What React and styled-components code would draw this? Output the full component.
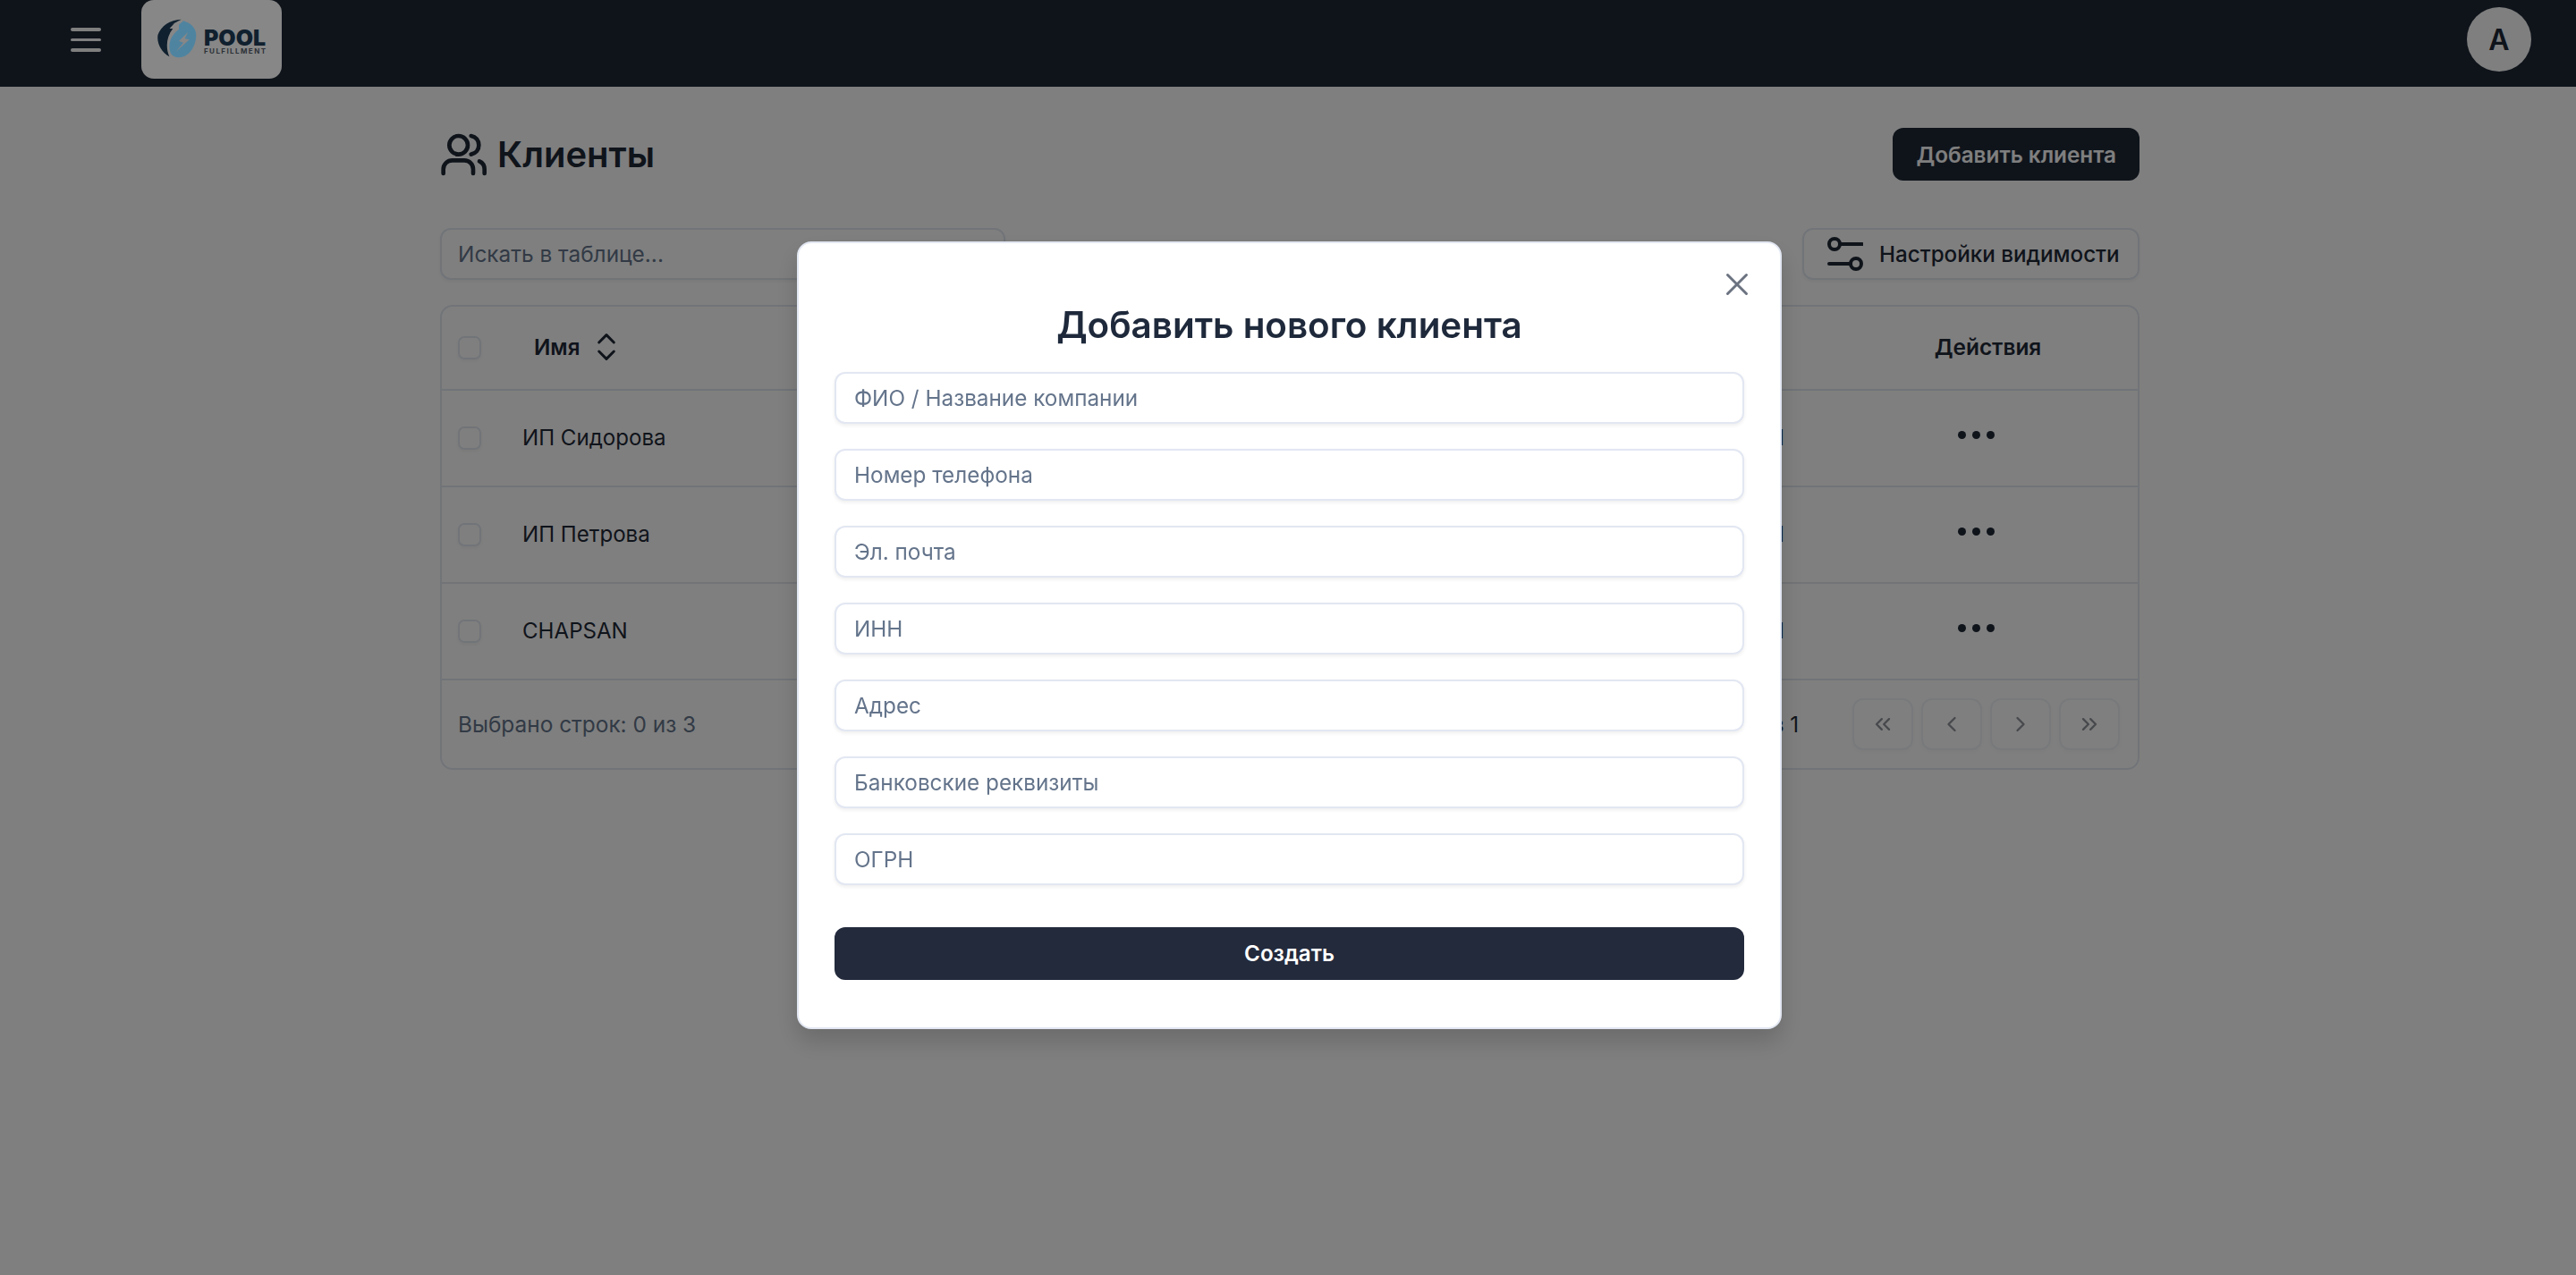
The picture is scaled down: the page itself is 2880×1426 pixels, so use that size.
import React from "react";
import styled, { createGlobalStyle } from "styled-components";
import {
  X,
  ChevronsUpDown,
  ChevronsLeft,
  ChevronLeft,
  ChevronRight,
  ChevronsRight,
} from "lucide-react";

const GlobalStyle = createGlobalStyle`
  html, body {
    margin: 0;
    padding: 0;
    height: 100%;
    background: #fff;
    font-family: Inter, "Noto Sans", sans-serif;
    color: #1f2937;
  }
  * { box-sizing: border-box; }
`;

const Page = styled.div`
  min-height: 1426px;
  overflow: hidden;
`;

const Header = styled.header`
  display: flex;
  align-items: flex-start;
  height: 97px;
  padding: 0 50px 0 79px;
  background-color: #1f2937;
`;

const MenuButton = styled.button`
  display: flex;
  flex-direction: column;
  gap: 8px;
  width: 34px;
  margin-top: 31px;
  padding: 0;
  border: 0;
  background: none;
`;

const MenuLine = styled.span`
  display: block;
  height: 3.6px;
  border-radius: 2px;
  background: #fff;
`;

/* lifted over the overlay: the logo keeps colours the dimming would lose */
const LogoCard = styled.div`
  position: relative;
  z-index: 20;
  display: flex;
  align-items: center;
  width: 157px;
  height: 88px;
  margin-left: 45px;
  padding: 0 0 0 18px;
  border-radius: 14px;
  background: #878787;
`;

const Avatar = styled.div`
  display: flex;
  align-items: center;
  justify-content: center;
  width: 72px;
  height: 72px;
  margin: 8px 0 0 auto;
  border-radius: 50%;
  background: #fff;
  color: #1f2937;
  font-size: 32px;
  font-weight: 600;
`;

const Main = styled.main`
  width: 1900px;
  margin: 0 auto;
  padding-top: 46px;
  transform: translateX(2px);
`;

const TitleRow = styled.div`
  display: flex;
  align-items: center;
  justify-content: space-between;
  margin-bottom: 53px;
`;

const Title = styled.h1`
  display: flex;
  align-items: center;
  gap: 12px;
  margin: 0;
  font-size: 40px;
  font-weight: 600;
  color: #1f2937;
`;

const PrimaryButton = styled.button`
  height: 59px;
  padding: 0 26px;
  border: 0;
  border-radius: 12px;
  background: #1f2937;
  color: #fff;
  font: 600 24.3px Inter, sans-serif;
`;

const Toolbar = styled.div`
  display: flex;
  align-items: center;
  justify-content: space-between;
  margin-bottom: 28px;
`;

const SearchInput = styled.input`
  width: 632px;
  height: 58px;
  padding: 0 18px;
  border: 2px solid #e2e8f0;
  border-radius: 12px;
  background: transparent;
  box-shadow: 0 2px 4px rgba(0, 0, 0, 0.05);
  font: 400 24.4px Inter, sans-serif;
  &::placeholder {
    color: #64748b;
    opacity: 1;
  }
`;

const VisibilityButton = styled.button`
  display: flex;
  align-items: center;
  gap: 18px;
  height: 58px;
  width: 377px;
  padding: 0 0 0 26px;
  border: 2px solid #e2e8f0;
  border-radius: 12px;
  background: transparent;
  box-shadow: 0 2px 4px rgba(0, 0, 0, 0.05);
  color: #1f2937;
  font: 500 24.2px Inter, sans-serif;
`;

const TableCard = styled.div`
  border: 2px solid #e2e8f0;
  border-radius: 14px;
`;

const Row = styled.div`
  display: grid;
  grid-template-columns: 90px 1fr 338px;
  align-items: center;
  height: ${(p) => (p.$head ? "94px" : "108px")};
  border-bottom: 2px solid #e2e8f0;
`;

const Checkbox = styled.span`
  display: block;
  width: 26px;
  height: 26px;
  margin-left: 18px;
  border: 2px solid #e2e8f0;
  border-radius: 7px;
  box-shadow: 0 2px 4px rgba(0, 0, 0, 0.05);
`;

const SortHeader = styled.div`
  display: flex;
  align-items: center;
  gap: 10px;
  padding: 0 0 2px 13px;
  font-size: 24.2px;
  font-weight: 600;
  color: #1f2937;
`;

const ActionsHeader = styled.div`
  padding: 0 0 2px 3px;
  text-align: center;
  font-size: 24.4px;
  font-weight: 600;
  color: #1f2937;
`;

const NameCell = styled.div`
  display: flex;
  justify-content: space-between;
  padding: 0 57px 2px 0;
  font-size: 24.1px;
  color: #1f2937;
`;

const ActionsCell = styled.div`
  display: flex;
  justify-content: center;
  gap: 7px;
  padding: 0 23px 8px 0;
`;

const Dot = styled.span`
  width: 9px;
  height: 9px;
  border-radius: 50%;
  background: #1f2937;
`;

const Footer = styled.div`
  display: flex;
  align-items: center;
  justify-content: space-between;
  height: 98px;
  padding: 0 20px 0 18px;
`;

const SelectedText = styled.div`
  font-size: 24.4px;
  color: #64748b;
`;

const PagerGroup = styled.div`
  display: flex;
  align-items: center;
`;

const PageText = styled.div`
  margin-right: 60px;
  font-size: 24.2px;
  color: #1f2937;
`;

const PageButton = styled.button`
  display: flex;
  align-items: center;
  justify-content: center;
  width: 68px;
  height: 58px;
  margin-left: ${(p) => (p.$first ? "0" : "9px")};
  border: 2px solid #e2e8f0;
  border-radius: 12px;
  background: transparent;
  color: #1f2937;
  opacity: 0.5;
  box-shadow: 0 2px 4px rgba(0, 0, 0, 0.05);
`;

const Overlay = styled.div`
  position: fixed;
  inset: 0;
  z-index: 10;
  display: flex;
  align-items: center;
  justify-content: center;
  padding: 0 0 5px 3px;
  background: rgba(0, 0, 0, 0.5);
`;

const Modal = styled.div`
  position: relative;
  display: flex;
  flex-direction: column;
  width: 1101px;
  height: 881px;
  padding: 66px 40px 0;
  border: 2px solid #e2e7f2;
  border-radius: 16px;
  background: #fff;
  box-shadow: 0 14px 26px rgba(0, 0, 0, 0.16);
`;

const CloseButton = styled.button`
  position: absolute;
  top: 25px;
  right: 27px;
  display: flex;
  padding: 0;
  border: 0;
  background: none;
  color: #6b7280;
`;

const ModalTitle = styled.h2`
  margin: 0 0 26px;
  height: 52px;
  line-height: 52px;
  text-align: center;
  font-size: 40.4px;
  font-weight: 600;
  color: #1e293b;
`;

const Fields = styled.div`
  display: flex;
  flex-direction: column;
  gap: 28px;
`;

const FieldInput = styled.input`
  width: 100%;
  height: 58px;
  padding: 0 20px;
  border: 2px solid #e2e7f2;
  border-radius: 12px;
  background: #fff;
  box-shadow: 0 2px 4px rgba(0, 0, 0, 0.07);
  font: 400 24.3px Inter, sans-serif;
  &::placeholder {
    color: #64748b;
    opacity: 1;
  }
`;

const SubmitButton = styled.button`
  width: 100%;
  height: 59px;
  margin-top: 47px;
  border: 0;
  border-radius: 12px;
  background: #232a3c;
  color: #fff;
  font: 600 24.2px Inter, sans-serif;
`;

const UsersIcon = () => (
  <svg width="52" height="48" viewBox="0 0 156 144" fill="none" stroke="#1f2937" strokeWidth="14" strokeLinecap="round">
    <circle cx="62" cy="40" r="31" />
    <path d="M104 9c16 3 26 15 26 31s-10 28-26 31" />
    <path d="M11 135v-14c0-18 14-30 30-30h40c18 0 30 14 30 30v14" />
    <path d="M132 94c9 4 17 14 17 27v14" />
  </svg>
);

const SlidersIcon = () => (
  <svg width="40" height="40" viewBox="0 0 40 40" fill="none" stroke="#1f2937" strokeWidth="4" strokeLinecap="round">
    <circle cx="8" cy="9" r="6" />
    <path d="M14 9h25" />
    <circle cx="32" cy="31" r="6" />
    <path d="M2 31h24" />
  </svg>
);

const Logo = () => (
  <svg width="122" height="46" viewBox="0 0 122 46">
    <path d="M26.700 .7C14 1 4 8 .5 18-1 27 4 37 13.300 42.300 9 32 10 20 17.300 11H13.500L19 5l-4 2z" fill="#10202e" />
    <path d="M29 2.300C38 5 43.300 11 43.300 18.300 43.300 31 35 43.300 24 43.300c-4 0-7.500-1.500-9.300-5C13 33 13 28 14.500 24 16 19 20 15 24 11.700l0-5z" fill="#4f84a0" />
    <path d="M34 15 24 25l5 1.700-8.300 10L35.700 23.300l-5-1z" fill="#878787" />
    <text x="52" y="30" textLength="69" lengthAdjust="spacingAndGlyphs" fontFamily="Inter, sans-serif" fontWeight="900" fontSize="24" fill="#10202e">POOL</text>
    <text x="52" y="38.500" textLength="69" lengthAdjust="spacing" fontFamily="Inter, sans-serif" fontWeight="700" fontSize="8" fill="#2d3238">FULFILLMENT</text>
  </svg>
);

const clients = ["ИП Сидорова", "ИП Петрова", "CHAPSAN"];
const fields = [
  "ФИО / Название компании",
  "Номер телефона",
  "Эл. почта",
  "ИНН",
  "Адрес",
  "Банковские реквизиты",
  "ОГРН",
];

export default function App() {
  return (
    <Page>
      <GlobalStyle />
      <Header>
        <MenuButton>
          <MenuLine />
          <MenuLine />
          <MenuLine />
        </MenuButton>
        <LogoCard>
          <Logo />
        </LogoCard>
        <Avatar>A</Avatar>
      </Header>

      <Main>
        <TitleRow>
          <Title>
            <UsersIcon />
            Клиенты
          </Title>
          <PrimaryButton>Добавить клиента</PrimaryButton>
        </TitleRow>

        <Toolbar>
          <SearchInput placeholder="Искать в таблице..." />
          <VisibilityButton>
            <SlidersIcon />
            Настройки видимости
          </VisibilityButton>
        </Toolbar>

        <TableCard>
          <Row $head>
            <Checkbox />
            <SortHeader>
              Имя
              <ChevronsUpDown size={40} strokeWidth={1.8} />
            </SortHeader>
            <ActionsHeader>Действия</ActionsHeader>
          </Row>
          {clients.map((name) => (
            <Row key={name}>
              <Checkbox />
              <NameCell>
                <span>{name}</span>
                <span>Н</span>
              </NameCell>
              <ActionsCell>
                <Dot />
                <Dot />
                <Dot />
              </ActionsCell>
            </Row>
          ))}
          <Footer>
            <SelectedText>Выбрано строк: 0 из 3</SelectedText>
            <PagerGroup>
              <PageText>Страница 1 из 1</PageText>
              <PageButton $first><ChevronsLeft size={28} /></PageButton>
              <PageButton><ChevronLeft size={28} /></PageButton>
              <PageButton><ChevronRight size={28} /></PageButton>
              <PageButton><ChevronsRight size={28} /></PageButton>
            </PagerGroup>
          </Footer>
        </TableCard>
      </Main>

      <Overlay>
        <Modal>
          <CloseButton>
            <X size={42} strokeWidth={1.7} />
          </CloseButton>
          <ModalTitle>Добавить нового клиента</ModalTitle>
          <Fields>
            {fields.map((f) => (
              <FieldInput key={f} placeholder={f} />
            ))}
          </Fields>
          <SubmitButton>Создать</SubmitButton>
        </Modal>
      </Overlay>
    </Page>
  );
}
